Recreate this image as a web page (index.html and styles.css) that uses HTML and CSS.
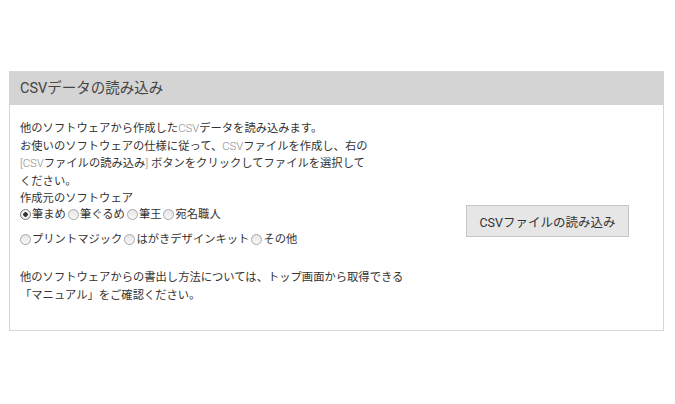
FILE: index.html
```html
<!DOCTYPE html>
<html lang="ja">
<head>
<meta charset="UTF-8">
<title>CSVデータの読み込み</title>
<link rel="stylesheet" href="styles.css">
</head>
<body>
    <div class="panel">
        <div class="panel-head">CSVデータの読み込み</div>
        <div class="panel-body">
            <div class="info">
                <p class="lead">他のソフトウェアから作成した<span class="en">CSV</span>データを読み込みます。<br>お使いのソフトウェアの仕様に従って、<span class="en">CSV</span>ファイルを作成し、右の<br><span class="en">[CSV</span>ファイルの読み込み<span class="en">]</span> ボタンをクリックしてファイルを選択して<br>ください。</p>
                <div class="label">作成元のソフトウェア</div>
                <div class="radios">
                    <label><input type="radio" name="soft" checked>筆まめ</label>
                    <label><input type="radio" name="soft">筆ぐるめ</label>
                    <label><input type="radio" name="soft">筆王</label>
                    <label><input type="radio" name="soft">宛名職人</label>
                </div>
                <div class="radios second">
                    <label><input type="radio" name="soft">プリントマジック</label>
                    <label><input type="radio" name="soft">はがきデザインキット</label>
                    <label><input type="radio" name="soft">その他</label>
                </div>
                <p class="note">他のソフトウェアからの書出し方法については、トップ画面から取得できる<br>「マニュアル」をご確認ください。</p>
            </div>
            <div class="action">
                <button type="button">CSVファイルの読み込み</button>
            </div>
        </div>
    </div>
</body>
</html>
```

FILE: styles.css
```css
body {
    margin: 0;
    background: #fff;
    font-family: Roboto, "Noto Sans CJK JP", sans-serif;
    color: #333;
}
.panel {
    width: 653px;
    margin: 71px 0 0 9px;
    border: 1px solid #d6d6d6;
}
.panel-head {
    height: 33px;
    line-height: 33px;
    padding-left: 10px;
    background: #d4d4d4;
    font-size: 14.5px;
    color: #444;
}
.panel-body {
    display: flex;
    padding: 15px 0 26px 10px;
}
.info {
    width: 412px;
    font-size: 11.3px;
    line-height: 17.5px;
}
.lead, .note {
    margin: 0;
}
.en {
    color: #8a8a8a;
    font-weight: 300;
}
.radios {
    display: flex;
    align-items: center;
    height: 14px;
}
.radios.second {
    margin-top: 11px;
}
.radios label {
    display: flex;
    align-items: center;
    margin-right: 2px;
}
.radios input {
    appearance: none;
    -webkit-appearance: none;
    width: 11px;
    height: 11px;
    margin: 0 1px 0 0;
    border: 1px solid #a8a8a8;
    border-radius: 50%;
    background: linear-gradient(#e6e6e6, #f8f8f8);
    box-sizing: border-box;
}
.radios input:checked {
    background: radial-gradient(circle, #333 0 2px, #f2f2f2 2.5px);
    border-color: #777;
}
.note {
    margin-top: 22.5px;
}
.action {
    flex: 1;
    display: flex;
    justify-content: center;
    align-items: center;
    padding-top: 18px;
}
button {
    height: 32px;
    width: 163px;
    padding: 0;
    white-space: nowrap;
    border: 1px solid #c6c6c6;
    background: #e6e6e6;
    color: #333;
    font-family: Roboto, "Noto Sans CJK JP", sans-serif;
    font-size: 12.5px;
}
```
